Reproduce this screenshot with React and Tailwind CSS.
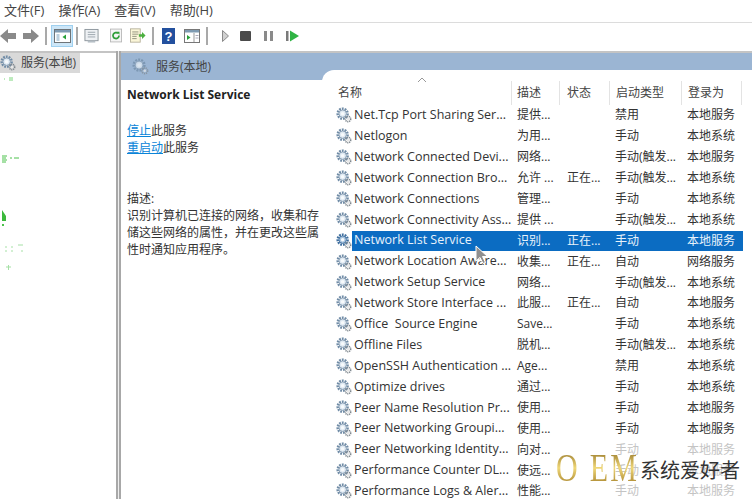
const FONT = "font-['Open_Sans','Noto_Sans_CJK_SC',sans-serif]";

const rows = [
  ["Net.Tcp Port Sharing Ser...", "提供...", "", "禁用", "本地服务"],
  ["Netlogon", "为用...", "", "手动", "本地系统"],
  ["Network Connected Devi...", "网络...", "", "手动(触发...", "本地服务"],
  ["Network Connection Bro...", "允许 ...", "正在...", "手动(触发...", "本地系统"],
  ["Network Connections", "管理...", "", "手动", "本地系统"],
  ["Network Connectivity Ass...", "提供 ...", "", "手动(触发...", "本地系统"],
  ["Network List Service", "识别...", "正在...", "手动", "本地服务"],
  ["Network Location Aware...", "收集...", "正在...", "自动", "网络服务"],
  ["Network Setup Service", "网络...", "", "手动(触发...", "本地系统"],
  ["Network Store Interface ...", "此服...", "正在...", "自动", "本地服务"],
  ["Office  Source Engine", "Save...", "", "手动", "本地系统"],
  ["Offline Files", "脱机...", "", "手动(触发...", "本地系统"],
  ["OpenSSH Authentication ...", "Age...", "", "禁用", "本地系统"],
  ["Optimize drives", "通过...", "", "手动", "本地系统"],
  ["Peer Name Resolution Pr...", "使用...", "", "手动", "本地服务"],
  ["Peer Networking Groupi...", "使用...", "", "手动", "本地服务"],
  ["Peer Networking Identity...", "向对...", "", "手动", "本地服务"],
  ["Performance Counter DL...", "使远...", "", "手动", "本地服务"],
  ["Performance Logs & Aler...", "性能...", "", "手动", "本地服务"],
];

// small pair of cogs used on every service row
const Gears = ({ className = "w-[16px] h-[16px]", dark = false }) => (
  <svg className={className} viewBox="0 0 18 18">
    <circle cx="7.5" cy="7.5" r="5.6" fill="none" stroke={dark ? "#3f6f9f" : "#6f8ba6"} strokeWidth="2.8" strokeDasharray="2 1.1" />
    <circle cx="7.5" cy="7.5" r="4.2" fill={dark ? "#a9c4dd" : "#dfe9f2"} stroke={dark ? "#3f6f9f" : "#7f97ae"} strokeWidth="1" />
    <circle cx="7.5" cy="7.5" r="2" fill="#f7fafc" />
    <circle cx="13.5" cy="13.5" r="3" fill="none" stroke="#7f888f" strokeWidth="1.8" strokeDasharray="1.3 .8" />
    <circle cx="13.5" cy="13.5" r="1.4" fill="#e8e8e8" />
  </svg>
);

const Separator = ({ className }) => <div className={`w-[2px] h-[18px] bg-[#a9a9a9] ${className}`} />;

const Toolbar = () => (
  <div className="h-[25px] flex items-center">
    <svg className="w-[40px] h-[16px] shrink-0" viewBox="0 0 40 16">
      <path d="M0 8l8-7v4h8v6H8v4z" fill="#8a8a8a" />
      <path d="M39 8l-8-7v4h-8v6h8v4z" fill="#8a8a8a" />
    </svg>
    <Separator className="ml-[5px]" />
    <div className="ml-[4px] w-[22px] h-[22px] bg-[#cde6f7] border border-[#9fd0ef] flex items-center justify-center">
      <svg className="w-[17px] h-[14px]" viewBox="0 0 17 14">
        <rect x=".5" y=".5" width="16" height="13" fill="#fff" stroke="#6e7478" />
        <rect x="1" y="1" width="15" height="2.5" fill="#7f9bb2" />
        <rect x="2.5" y="5" width="3" height="7" fill="#bcd0de" />
        <path d="M12 5.5v5l-3.500-2.500z" fill="#27a038" />
      </svg>
    </div>
    <Separator className="ml-[3px]" />
    <svg className="w-[15px] h-[16px] ml-[6px]" viewBox="0 0 16 16">
      <rect x="1" y="1" width="14" height="12" fill="#eef1f4" stroke="#8b949b" />
      <path d="M4 4h8M4 6.500h8M4 9h8" stroke="#9aa4ac" />
      <rect x="4" y="13" width="8" height="2" fill="#b5bec5" />
    </svg>
    <svg className="w-[12px] h-[15px] ml-[11px]" viewBox="0 0 14 16">
      <rect x=".5" y=".5" width="13" height="15" fill="#f5f5f5" stroke="#b5b5b5" />
      <path d="M10.500 8a3.500 3.500 0 1 1-1.200-2.600" fill="none" stroke="#2f9e38" strokeWidth="2" />
      <path d="M7.500 3.500h3.500v3.500z" fill="#2f9e38" />
    </svg>
    <svg className="w-[16px] h-[15px] ml-[8px]" viewBox="0 0 18 16">
      <rect x=".5" y=".5" width="11" height="15" fill="#fbf6d8" stroke="#b5b09a" />
      <path d="M2.500 4h7M2.500 6.500h7M2.500 9h5M2.500 11.500h5" stroke="#8b8b78" />
      <path d="M10 6.500h3.500V4l4 4-4 4V9.500H10z" fill="#4caf3f" />
    </svg>
    <Separator className="ml-[6px]" />
    <svg className="w-[13px] h-[16px] ml-[8px]" viewBox="0 0 13 16">
      <rect width="13" height="16" fill="#23509e" />
      <text x="6.500" y="13" textAnchor="middle" fontSize="13" fontWeight="700" fill="#fff" fontFamily="Liberation Sans">?</text>
    </svg>
    <svg className="w-[16px] h-[14px] ml-[9px]" viewBox="0 0 16 14">
      <rect x=".5" y=".5" width="15" height="13" fill="#fff" stroke="#777" />
      <rect x="1" y="1" width="14" height="2.500" fill="#7f9bb2" />
      <path d="M3 6v5l3.500-2.500z" fill="#27a038" />
      <path d="M10 4v9" stroke="#999" />
      <path d="M11.500 6.500h3M11.500 9h3" stroke="#aab" />
    </svg>
    <Separator className="ml-[6px]" />
    <svg className="w-[80px] h-[14px] ml-[14px]" viewBox="0 0 80 14">
      <path d="M.5 1.500v11l6-5.500z" fill="#d0d0d0" stroke="#8a8a8a" />
      <rect x="18" y="2" width="11" height="10" rx="1" fill="#4a4a4a" />
      <rect x="42" y="2" width="3" height="10" fill="#8a8a8a" />
      <rect x="48" y="2" width="3" height="10" fill="#8a8a8a" />
      <rect x="64" y="2" width="2.500" height="10" fill="#7a7a7a" />
      <path d="M68 1.500v11l9-5.500z" fill="#2fb344" />
    </svg>
  </div>
);

const Row = ({ row, selected, faded }) => (
  <div className="flex items-center h-[20.9px]">
    <div className="w-[17px] shrink-0 flex">
      <Gears className="w-[16px] h-[16px] shrink-0 ml-[1px]" dark={selected} />
    </div>
    <div className={selected ? "flex items-center h-[20px] w-[391px] bg-[#0b6cc2] text-[#e8f2fb]" : "flex items-center h-[20px] w-[391px] text-[#333]"}>
      <span className="w-[165px] pl-[2px] text-[12.5px] whitespace-pre">{row[0]}</span>
      <span className="w-[50px] text-[12px] whitespace-nowrap">{row[1]}</span>
      <span className="w-[48px] text-[12px] whitespace-nowrap">{row[2]}</span>
      <span className={faded ? "w-[72px] text-[12px] whitespace-nowrap text-[#c4c4c4]" : "w-[72px] text-[12px] whitespace-nowrap"}>{row[3]}</span>
      <span className={faded ? "text-[12px] whitespace-nowrap text-[#c4c4c4]" : "text-[12px] whitespace-nowrap"}>{row[4]}</span>
    </div>
  </div>
);

const App = () => {
  return (
    <div className={`${FONT} w-[752px] h-[499px] bg-white overflow-hidden relative`}>
      {/* Menu */}
      <div className="h-[22px] flex items-center pl-[4px] gap-[14px] text-[13px] text-[#444]">
        <span>文件(F)</span>
        <span>操作(A)</span>
        <span>查看(V)</span>
        <span>帮助(H)</span>
      </div>
      <div className="border-t border-[#dcdcdc]">
        <Toolbar />
      </div>

      <div className="flex mt-[3px] border-t-2 border-[#c4c4c4] h-[448px]">
        {/* Tree */}
        <div className="w-[116px] relative">
          <div className="w-[80px] h-[20px] bg-[#d9d9d9] flex items-center text-[12px] text-[#444]">
            <Gears className="w-[16px] h-[16px] shrink-0 mr-[5px]" />
            服务(本地)
          </div>
          <svg className="absolute left-0 top-[20px] w-[30px] h-[200px]" viewBox="0 0 30 200">
            <path d="M4 6h1M9 5h4M9 7h4" stroke="#7cd67c" />
            <path d="M2 83h5M2 85h4M2 87h5M2 89h4M10 85h2M14 85h5" stroke="#4cc24c" />
            <path d="M2 137l4 6v5H2z" fill="#3cb93c" />
            <path d="M2 151h2v2H2z" fill="#4cc24c" />
            <path d="M5 174h2M11 174h2M18 172h5M5 178h2M11 178h2M21 178h2" stroke="#a5e0a5" />
            <path d="M6 194h5M8.500 192v5" stroke="#a5e0a5" />
          </svg>
        </div>
        {/* Splitter */}
        <div className="w-[5px] -mt-[2px] bg-[#eeeeee] border-x-2 border-[#a8a8a8]" />

        {/* Right panel */}
        <div className="flex-1 min-w-0">
          <div className="h-[27px] bg-[#9bb5d3] flex items-center pl-[11px] text-[12px] text-[#444]">
            <Gears className="w-[17px] h-[17px] shrink-0 mr-[7px] opacity-70" />
            服务(本地)
          </div>
          <div className="flex">
            <div className="w-[201px] shrink-0 pl-[6px] text-[12px] leading-[17px] text-[#333]">
              <div className="font-bold text-[12px] h-[16px] mt-[7px] leading-[16px] text-[#222]">
                Network List Service
              </div>
              <div className="mt-[19px]">
                <span className="text-[#0a84d8] underline">停止</span>此服务
              </div>
              <div>
                <span className="text-[#0a84d8] underline">重启动</span>此服务
              </div>
              <div className="mt-[34px]">描述:</div>
              <div>识别计算机已连接的网络，收集和存储这些网络的属性，并在更改这些属性时通知应用程序。</div>
            </div>

            {/* Service list */}
            <div className="flex-1 min-w-0 -mt-[10px] bg-white rounded-tl-[12px] pl-[13px] relative">
              <div className="flex h-[35px] items-center text-[12px] text-[#444] pt-[11px] ml-[2px]">
                <div className="w-[175px] pl-[1px] relative h-[24px] leading-[24px] border-r border-[#e3e3e3]">
                  名称
                  <svg className="absolute left-[80px] -top-[4px] w-[10px] h-[6px]" viewBox="0 0 10 6">
                    <path d="M1 5l4-4 4 4" fill="none" stroke="#999" />
                  </svg>
                </div>
                <div className="w-[48px] pl-[5px] h-[24px] leading-[24px] border-r border-[#e3e3e3]">描述</div>
                <div className="w-[50px] pl-[7px] h-[24px] leading-[24px] border-r border-[#e3e3e3]">状态</div>
                <div className="w-[72px] pl-[6px] h-[24px] leading-[24px] border-r border-[#e3e3e3]">启动类型</div>
                <div className="w-[60px] pl-[6px] h-[24px] leading-[24px] border-r border-[#e3e3e3]">登录为</div>
              </div>
              <div>
                {rows.map((row, i) => (
                  <Row key={row[0]} row={row} selected={i === 6} faded={i >= 16} />
                ))}
              </div>
            </div>
          </div>
        </div>
      </div>

      {/* Mouse cursor */}
      <svg className="absolute left-[475px] top-[245px] w-[14px] h-[20px]" viewBox="0 0 14 20">
        <path d="M1 1v15l4-3.500 3 6 2.500-1-3-6h5z" fill="#8f8f8f" stroke="#fff" strokeWidth="1" />
      </svg>

      {/* Watermark */}
      <div className="absolute left-[556px] top-[448px] h-[40px] flex items-center">
        <span className="font-['Liberation_Serif',serif] text-[40px] leading-[40px] tracking-[3px] scale-x-75 origin-left -mr-[27px] bg-gradient-to-b from-[#8a6a1c] via-[#f0d878] to-[#9a7418] bg-clip-text text-transparent">
          <span className="tracking-[16px]">O</span>EM
        </span>
        <span className="text-[20px] text-[#333] leading-[40px] mt-[5px]">系统爱好者</span>
      </div>
    </div>
  );
};

export default App;
